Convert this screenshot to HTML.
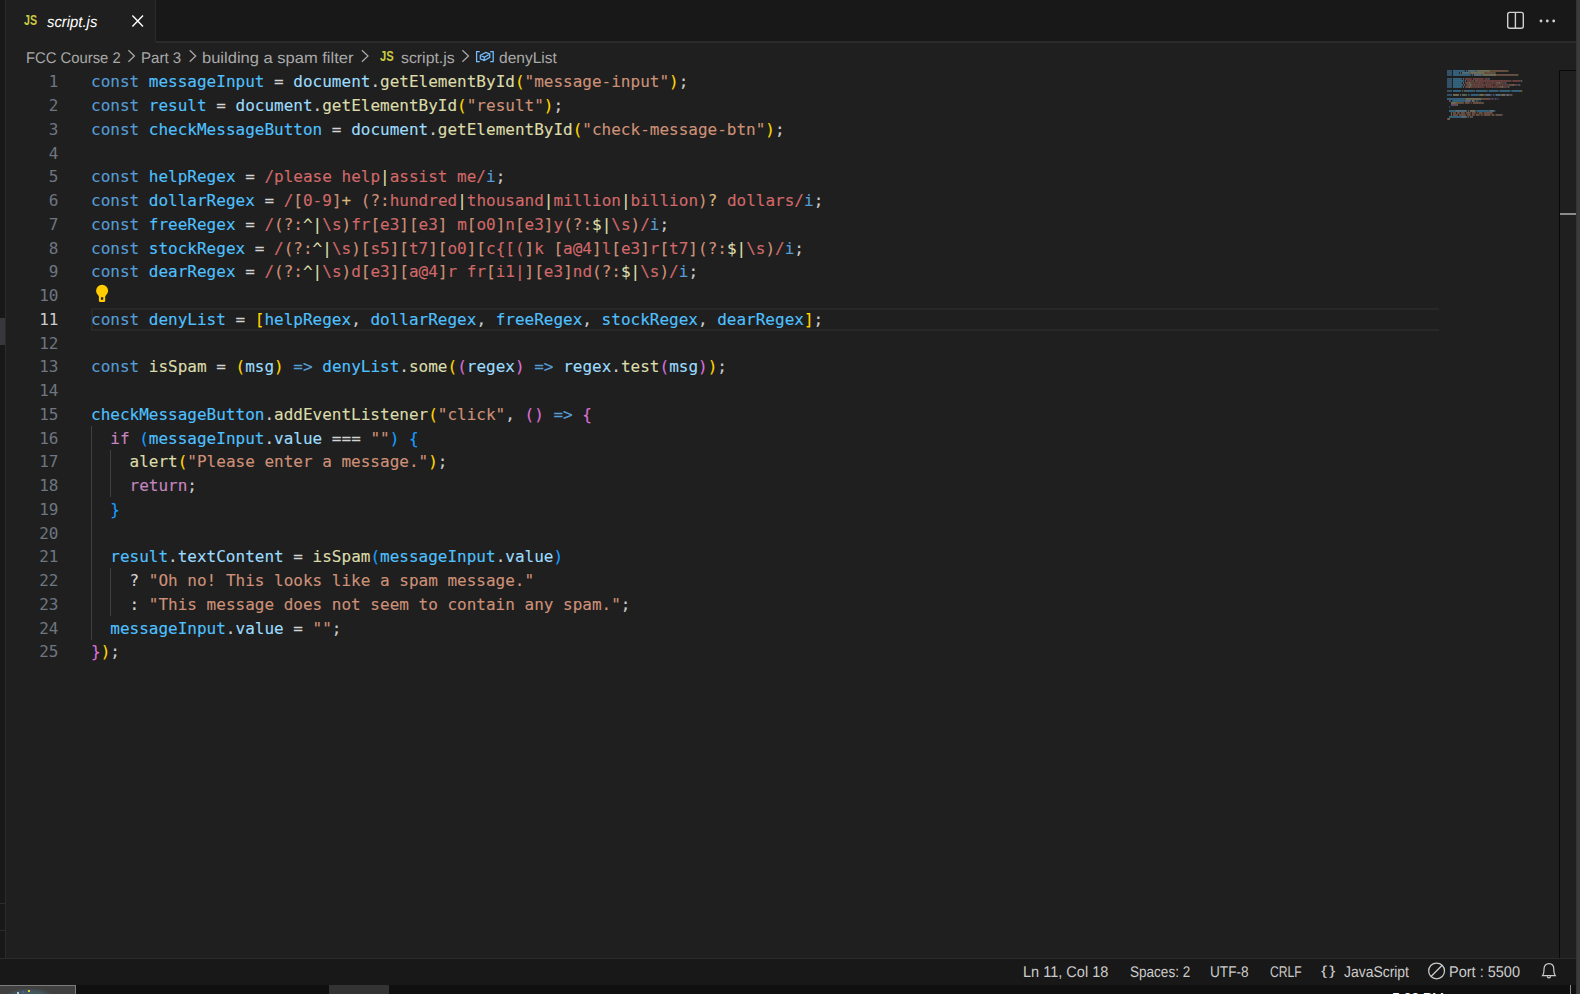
<!DOCTYPE html>
<html><head><meta charset="utf-8"><title>script.js</title>
<style>
*{box-sizing:border-box;margin:0;padding:0}
html,body{width:1580px;height:994px;overflow:hidden;background:#1f1f1f}
body{position:relative;font-family:"Liberation Sans","DejaVu Sans",sans-serif;color:#cccccc}
.abs{position:absolute}
#leftstrip{left:0;top:0;width:5px;height:985px;background:#181818}
#leftborder{left:5px;top:0;width:1px;height:958px;background:#2b2b2b}
#tabbar{left:6px;top:0;width:1570px;height:41px;background:#181818}
#tabbarborder{left:155px;top:41px;width:1421px;height:1.5px;background:#2b2b2b}
#tab{left:6px;top:0;width:150px;height:43px;background:#1f1f1f}
#tabright{left:155px;top:0;width:1px;height:42px;background:#2b2b2b}
.t{position:absolute;white-space:pre;line-height:20px;font-size:15.5px;text-rendering:geometricPrecision;transform-origin:0 0;color:#cccccc}
.bc{color:#a9a9a9}
#code{left:91px;top:70.3px;font-family:"DejaVu Sans Mono","Liberation Mono",monospace;font-size:16px;color:#cccccc;-webkit-text-stroke:0.12px}
#code .ln{height:23.75px;line-height:23.75px;white-space:pre}
#nums{left:0;top:70.3px;width:58.5px;font-family:"DejaVu Sans Mono","Liberation Mono",monospace;font-size:16px;text-align:right;color:#6e7681}
#nums .n{height:23.75px;line-height:23.75px}
#nums .act{color:#cccccc}
.c0{color:#569cd6}.c1{color:#4fc1ff}.c2{color:#d4d4d4}.c3{color:#9cdcfe}.c4{color:#dcdcaa}.c5{color:#ffd700}.c6{color:#ce9178}.c7{color:#d16969}.c8{color:#d7ba7d}.c9{color:#da70d6}.c10{color:#c586c0}.c11{color:#179fff}
.guide{width:1px;background:#404040}
#status{left:0;top:958px;width:1576px;height:27px;background:#181818;border-top:1px solid #2b2b2b}
#taskbar{left:0;top:985px;width:1580px;height:9px;background:#101010}
</style></head><body>
<div id="leftstrip" class="abs"></div>
<div class="abs" style="left:0;top:318px;width:5px;height:27px;background:#37373d"></div>
<div class="abs" style="left:0;top:903px;width:5px;height:1px;background:#2b2b2b"></div>
<div class="abs" style="left:0;top:930px;width:5px;height:1px;background:#2b2b2b"></div>
<div id="leftborder" class="abs"></div>
<div id="tabbar" class="abs"></div>
<div id="tabbarborder" class="abs"></div>
<div id="tab" class="abs"></div>
<div id="tabright" class="abs"></div>
<!-- tab content -->
<svg class="abs" style="left:130px;top:13px" width="16" height="16" viewBox="0 0 16 16"><path d="M2.4 2.6 L13 13.4 M13 2.6 L2.4 13.4" stroke="#ffffff" stroke-width="1.4" fill="none"/></svg>
<!-- top right icons -->
<svg class="abs" style="left:1505px;top:10px" width="22" height="22" viewBox="0 0 22 22"><rect x="2.7" y="2.4" width="15.6" height="15.8" rx="2" fill="none" stroke="#d0d0d0" stroke-width="1.4"/><path d="M10.4 2.4V18.2" stroke="#d0d0d0" stroke-width="1.4"/></svg>
<svg class="abs" style="left:1536px;top:16px" width="24" height="10" viewBox="0 0 24 10"><circle cx="5" cy="5" r="1.4" fill="#d0d0d0"/><circle cx="11.3" cy="5" r="1.4" fill="#d0d0d0"/><circle cx="17.7" cy="5" r="1.4" fill="#d0d0d0"/></svg>
<!-- breadcrumbs -->

<svg class="abs" style="left:0;top:44px" width="600" height="24" viewBox="0 0 600 24" fill="none" stroke="#a9a9a9" stroke-width="1.25">
<path d="M128.4 6.3 L134.4 12 L128.4 17.700"/><path d="M189.7 6.3 L195.7 12 L189.7 17.700"/><path d="M361.9 6.3 L368.0 12 L361.9 17.700"/><path d="M462.4 6.3 L468.5 12 L462.4 17.700"/>
<g stroke="#75beff" stroke-width="1.250"><path d="M479.800 7.700 H476.600 V17.700 H479.800"/><path d="M490.200 7.700 H493.200 V17.700 H490.200"/><path d="M480.300 11.300 L485.800 8.500 L489.800 10 L489.800 13.300 L484.200 16.500 L480.300 14.800 Z M480.300 11.300 L484.300 13.200 L489.800 10 M484.300 13.200 L484.200 16.500"/></g>
</svg>
<!-- current line -->
<div class="abs" style="left:91px;top:308px;width:1348px;height:23px;border:2px solid #282828;border-right:none"></div>
<!-- indent guides -->
<div class="abs guide" style="left:91px;top:425.8px;height:213.8px"></div>
<div class="abs guide" style="left:110.3px;top:449.6px;height:47.5px"></div>
<div class="abs guide" style="left:110.3px;top:568.4px;height:47.5px"></div>
<!-- lightbulb -->
<svg class="abs" style="left:90px;top:280px" width="24" height="26" viewBox="0 0 24 26"><path fill-rule="evenodd" d="M12.1 4.8A6 6 0 0 0 6.100 10.800C6.100 13 7.400 14.500 8.300 15.500C8.800 16 8.900 16.400 8.900 17V20.800A1.300 1.300 0 0 0 10.200 22.100H13.900A1.300 1.300 0 0 0 15.200 20.800V17C15.200 16.400 15.300 16 15.800 15.500C16.700 14.500 18.100 13 18.100 10.800A6 6 0 0 0 12.100 4.800ZM10.900 17.300H13.200V19.700H10.900Z" fill="#ffcc00"/></svg>
<div id="nums" class="abs">
<div class="n">1</div>
<div class="n">2</div>
<div class="n">3</div>
<div class="n">4</div>
<div class="n">5</div>
<div class="n">6</div>
<div class="n">7</div>
<div class="n">8</div>
<div class="n">9</div>
<div class="n">10</div>
<div class="n act">11</div>
<div class="n">12</div>
<div class="n">13</div>
<div class="n">14</div>
<div class="n">15</div>
<div class="n">16</div>
<div class="n">17</div>
<div class="n">18</div>
<div class="n">19</div>
<div class="n">20</div>
<div class="n">21</div>
<div class="n">22</div>
<div class="n">23</div>
<div class="n">24</div>
<div class="n">25</div>

</div>
<div id="code" class="abs">
<div class="ln"><span class="c0">const</span> <span class="c1">messageInput</span> <span class="c2">=</span> <span class="c3">document</span>.<span class="c4">getElementById</span><span class="c5">(</span><span class="c6">"message-input"</span><span class="c5">)</span>;</div>
<div class="ln"><span class="c0">const</span> <span class="c1">result</span> <span class="c2">=</span> <span class="c3">document</span>.<span class="c4">getElementById</span><span class="c5">(</span><span class="c6">"result"</span><span class="c5">)</span>;</div>
<div class="ln"><span class="c0">const</span> <span class="c1">checkMessageButton</span> <span class="c2">=</span> <span class="c3">document</span>.<span class="c4">getElementById</span><span class="c5">(</span><span class="c6">"check-message-btn"</span><span class="c5">)</span>;</div>
<div class="ln"></div>
<div class="ln"><span class="c0">const</span> <span class="c1">helpRegex</span> <span class="c2">=</span> <span class="c7">/please help</span><span class="c4">|</span><span class="c7">assist me/</span><span class="c0">i</span>;</div>
<div class="ln"><span class="c0">const</span> <span class="c1">dollarRegex</span> <span class="c2">=</span> <span class="c7">/</span><span class="c6">[</span><span class="c7">0-9</span><span class="c6">]</span><span class="c8">+</span><span class="c7"> </span><span class="c6">(?:</span><span class="c7">hundred</span><span class="c4">|</span><span class="c7">thousand</span><span class="c4">|</span><span class="c7">million</span><span class="c4">|</span><span class="c7">billion</span><span class="c6">)</span><span class="c8">?</span><span class="c7"> dollars/</span><span class="c0">i</span>;</div>
<div class="ln"><span class="c0">const</span> <span class="c1">freeRegex</span> <span class="c2">=</span> <span class="c7">/</span><span class="c6">(?:</span><span class="c4">^|</span><span class="c7">\s</span><span class="c6">)</span><span class="c7">fr</span><span class="c6">[</span><span class="c7">e3</span><span class="c6">][</span><span class="c7">e3</span><span class="c6">]</span><span class="c7"> m</span><span class="c6">[</span><span class="c7">o0</span><span class="c6">]</span><span class="c7">n</span><span class="c6">[</span><span class="c7">e3</span><span class="c6">]</span><span class="c7">y</span><span class="c6">(?:</span><span class="c4">$|</span><span class="c7">\s</span><span class="c6">)</span><span class="c7">/</span><span class="c0">i</span>;</div>
<div class="ln"><span class="c0">const</span> <span class="c1">stockRegex</span> <span class="c2">=</span> <span class="c7">/</span><span class="c6">(?:</span><span class="c4">^|</span><span class="c7">\s</span><span class="c6">)[</span><span class="c7">s5</span><span class="c6">][</span><span class="c7">t7</span><span class="c6">][</span><span class="c7">o0</span><span class="c6">][</span><span class="c7">c{[(</span><span class="c6">]</span><span class="c7">k </span><span class="c6">[</span><span class="c7">a@4</span><span class="c6">]</span><span class="c7">l</span><span class="c6">[</span><span class="c7">e3</span><span class="c6">]</span><span class="c7">r</span><span class="c6">[</span><span class="c7">t7</span><span class="c6">](?:</span><span class="c4">$|</span><span class="c7">\s</span><span class="c6">)</span><span class="c7">/</span><span class="c0">i</span>;</div>
<div class="ln"><span class="c0">const</span> <span class="c1">dearRegex</span> <span class="c2">=</span> <span class="c7">/</span><span class="c6">(?:</span><span class="c4">^|</span><span class="c7">\s</span><span class="c6">)</span><span class="c7">d</span><span class="c6">[</span><span class="c7">e3</span><span class="c6">][</span><span class="c7">a@4</span><span class="c6">]</span><span class="c7">r fr</span><span class="c6">[</span><span class="c7">i1|</span><span class="c6">][</span><span class="c7">e3</span><span class="c6">]</span><span class="c7">nd</span><span class="c6">(?:</span><span class="c4">$|</span><span class="c7">\s</span><span class="c6">)</span><span class="c7">/</span><span class="c0">i</span>;</div>
<div class="ln"></div>
<div class="ln"><span class="c0">const</span> <span class="c1">denyList</span> <span class="c2">=</span> <span class="c5">[</span><span class="c1">helpRegex</span>, <span class="c1">dollarRegex</span>, <span class="c1">freeRegex</span>, <span class="c1">stockRegex</span>, <span class="c1">dearRegex</span><span class="c5">]</span>;</div>
<div class="ln"></div>
<div class="ln"><span class="c0">const</span> <span class="c4">isSpam</span> <span class="c2">=</span> <span class="c5">(</span><span class="c3">msg</span><span class="c5">)</span> <span class="c0">=&gt;</span> <span class="c1">denyList</span>.<span class="c4">some</span><span class="c5">(</span><span class="c9">(</span><span class="c3">regex</span><span class="c9">)</span> <span class="c0">=&gt;</span> <span class="c3">regex</span>.<span class="c4">test</span><span class="c9">(</span><span class="c3">msg</span><span class="c9">)</span><span class="c5">)</span>;</div>
<div class="ln"></div>
<div class="ln"><span class="c1">checkMessageButton</span>.<span class="c4">addEventListener</span><span class="c5">(</span><span class="c6">"click"</span>, <span class="c9">()</span> <span class="c0">=&gt;</span> <span class="c9">{</span></div>
<div class="ln">  <span class="c10">if</span> <span class="c11">(</span><span class="c1">messageInput</span>.<span class="c3">value</span> <span class="c2">===</span> <span class="c6">""</span><span class="c11">)</span> <span class="c11">{</span></div>
<div class="ln">    <span class="c4">alert</span><span class="c5">(</span><span class="c6">"Please enter a message."</span><span class="c5">)</span>;</div>
<div class="ln">    <span class="c10">return</span>;</div>
<div class="ln">  <span class="c11">}</span></div>
<div class="ln"></div>
<div class="ln">  <span class="c1">result</span>.<span class="c3">textContent</span> <span class="c2">=</span> <span class="c4">isSpam</span><span class="c11">(</span><span class="c1">messageInput</span>.<span class="c3">value</span><span class="c11">)</span></div>
<div class="ln">    <span class="c2">?</span> <span class="c6">"Oh no! This looks like a spam message."</span></div>
<div class="ln">    <span class="c2">:</span> <span class="c6">"This message does not seem to contain any spam."</span>;</div>
<div class="ln">  <span class="c1">messageInput</span>.<span class="c3">value</span> <span class="c2">=</span> <span class="c6">""</span>;</div>
<div class="ln"><span class="c9">}</span><span class="c5">)</span>;</div>

</div>
<!-- minimap + scrollbar -->
<svg class="abs" style="left:0;top:0" width="1580" height="994" viewBox="0 0 1580 994" opacity="0.42"><rect x="1447.00" y="70.00" width="4.95" height="1.9" fill="#569cd6"/><rect x="1452.94" y="70.00" width="11.88" height="1.9" fill="#4fc1ff"/><rect x="1465.81" y="70.00" width="0.99" height="1.9" fill="#d4d4d4"/><rect x="1467.79" y="70.00" width="7.92" height="1.9" fill="#9cdcfe"/><rect x="1475.71" y="70.00" width="0.99" height="1.9" fill="#cccccc"/><rect x="1476.70" y="70.00" width="13.86" height="1.9" fill="#dcdcaa"/><rect x="1490.56" y="70.00" width="0.99" height="1.9" fill="#ffd700"/><rect x="1491.55" y="70.00" width="14.85" height="1.9" fill="#ce9178"/><rect x="1506.40" y="70.00" width="0.99" height="1.9" fill="#ffd700"/><rect x="1507.39" y="70.00" width="0.99" height="1.9" fill="#cccccc"/><rect x="1447.00" y="72.00" width="4.95" height="1.9" fill="#569cd6"/><rect x="1452.94" y="72.00" width="5.94" height="1.9" fill="#4fc1ff"/><rect x="1459.87" y="72.00" width="0.99" height="1.9" fill="#d4d4d4"/><rect x="1461.85" y="72.00" width="7.92" height="1.9" fill="#9cdcfe"/><rect x="1469.77" y="72.00" width="0.99" height="1.9" fill="#cccccc"/><rect x="1470.76" y="72.00" width="13.86" height="1.9" fill="#dcdcaa"/><rect x="1484.62" y="72.00" width="0.99" height="1.9" fill="#ffd700"/><rect x="1485.61" y="72.00" width="7.92" height="1.9" fill="#ce9178"/><rect x="1493.53" y="72.00" width="0.99" height="1.9" fill="#ffd700"/><rect x="1494.52" y="72.00" width="0.99" height="1.9" fill="#cccccc"/><rect x="1447.00" y="74.00" width="4.95" height="1.9" fill="#569cd6"/><rect x="1452.94" y="74.00" width="17.82" height="1.9" fill="#4fc1ff"/><rect x="1471.75" y="74.00" width="0.99" height="1.9" fill="#d4d4d4"/><rect x="1473.73" y="74.00" width="7.92" height="1.9" fill="#9cdcfe"/><rect x="1481.65" y="74.00" width="0.99" height="1.9" fill="#cccccc"/><rect x="1482.64" y="74.00" width="13.86" height="1.9" fill="#dcdcaa"/><rect x="1496.50" y="74.00" width="0.99" height="1.9" fill="#ffd700"/><rect x="1497.49" y="74.00" width="18.81" height="1.9" fill="#ce9178"/><rect x="1516.30" y="74.00" width="0.99" height="1.9" fill="#ffd700"/><rect x="1517.29" y="74.00" width="0.99" height="1.9" fill="#cccccc"/><rect x="1447.00" y="78.00" width="4.95" height="1.9" fill="#569cd6"/><rect x="1452.94" y="78.00" width="8.91" height="1.9" fill="#4fc1ff"/><rect x="1462.84" y="78.00" width="0.99" height="1.9" fill="#d4d4d4"/><rect x="1464.82" y="78.00" width="6.93" height="1.9" fill="#d16969"/><rect x="1472.74" y="78.00" width="3.96" height="1.9" fill="#d16969"/><rect x="1476.70" y="78.00" width="0.99" height="1.9" fill="#dcdcaa"/><rect x="1477.69" y="78.00" width="5.94" height="1.9" fill="#d16969"/><rect x="1484.62" y="78.00" width="2.97" height="1.9" fill="#d16969"/><rect x="1487.59" y="78.00" width="0.99" height="1.9" fill="#569cd6"/><rect x="1488.58" y="78.00" width="0.99" height="1.9" fill="#cccccc"/><rect x="1447.00" y="80.00" width="4.95" height="1.9" fill="#569cd6"/><rect x="1452.94" y="80.00" width="10.89" height="1.9" fill="#4fc1ff"/><rect x="1464.82" y="80.00" width="0.99" height="1.9" fill="#d4d4d4"/><rect x="1466.80" y="80.00" width="0.99" height="1.9" fill="#d16969"/><rect x="1467.79" y="80.00" width="0.99" height="1.9" fill="#ce9178"/><rect x="1468.78" y="80.00" width="2.97" height="1.9" fill="#d16969"/><rect x="1471.75" y="80.00" width="0.99" height="1.9" fill="#ce9178"/><rect x="1472.74" y="80.00" width="0.99" height="1.9" fill="#d7ba7d"/><rect x="1474.72" y="80.00" width="2.97" height="1.9" fill="#ce9178"/><rect x="1477.69" y="80.00" width="6.93" height="1.9" fill="#d16969"/><rect x="1484.62" y="80.00" width="0.99" height="1.9" fill="#dcdcaa"/><rect x="1485.61" y="80.00" width="7.92" height="1.9" fill="#d16969"/><rect x="1493.53" y="80.00" width="0.99" height="1.9" fill="#dcdcaa"/><rect x="1494.52" y="80.00" width="6.93" height="1.9" fill="#d16969"/><rect x="1501.45" y="80.00" width="0.99" height="1.9" fill="#dcdcaa"/><rect x="1502.44" y="80.00" width="6.93" height="1.9" fill="#d16969"/><rect x="1509.37" y="80.00" width="0.99" height="1.9" fill="#ce9178"/><rect x="1510.36" y="80.00" width="0.99" height="1.9" fill="#d7ba7d"/><rect x="1512.34" y="80.00" width="7.92" height="1.9" fill="#d16969"/><rect x="1520.26" y="80.00" width="0.99" height="1.9" fill="#569cd6"/><rect x="1521.25" y="80.00" width="0.99" height="1.9" fill="#cccccc"/><rect x="1447.00" y="82.00" width="4.95" height="1.9" fill="#569cd6"/><rect x="1452.94" y="82.00" width="8.91" height="1.9" fill="#4fc1ff"/><rect x="1462.84" y="82.00" width="0.99" height="1.9" fill="#d4d4d4"/><rect x="1464.82" y="82.00" width="0.99" height="1.9" fill="#d16969"/><rect x="1465.81" y="82.00" width="2.97" height="1.9" fill="#ce9178"/><rect x="1468.78" y="82.00" width="1.98" height="1.9" fill="#dcdcaa"/><rect x="1470.76" y="82.00" width="1.98" height="1.9" fill="#d16969"/><rect x="1472.74" y="82.00" width="0.99" height="1.9" fill="#ce9178"/><rect x="1473.73" y="82.00" width="1.98" height="1.9" fill="#d16969"/><rect x="1475.71" y="82.00" width="0.99" height="1.9" fill="#ce9178"/><rect x="1476.70" y="82.00" width="1.98" height="1.9" fill="#d16969"/><rect x="1478.68" y="82.00" width="1.98" height="1.9" fill="#ce9178"/><rect x="1480.66" y="82.00" width="1.98" height="1.9" fill="#d16969"/><rect x="1482.64" y="82.00" width="0.99" height="1.9" fill="#ce9178"/><rect x="1484.62" y="82.00" width="0.99" height="1.9" fill="#d16969"/><rect x="1485.61" y="82.00" width="0.99" height="1.9" fill="#ce9178"/><rect x="1486.60" y="82.00" width="1.98" height="1.9" fill="#d16969"/><rect x="1488.58" y="82.00" width="0.99" height="1.9" fill="#ce9178"/><rect x="1489.57" y="82.00" width="0.99" height="1.9" fill="#d16969"/><rect x="1490.56" y="82.00" width="0.99" height="1.9" fill="#ce9178"/><rect x="1491.55" y="82.00" width="1.98" height="1.9" fill="#d16969"/><rect x="1493.53" y="82.00" width="0.99" height="1.9" fill="#ce9178"/><rect x="1494.52" y="82.00" width="0.99" height="1.9" fill="#d16969"/><rect x="1495.51" y="82.00" width="2.97" height="1.9" fill="#ce9178"/><rect x="1498.48" y="82.00" width="1.98" height="1.9" fill="#dcdcaa"/><rect x="1500.46" y="82.00" width="1.98" height="1.9" fill="#d16969"/><rect x="1502.44" y="82.00" width="0.99" height="1.9" fill="#ce9178"/><rect x="1503.43" y="82.00" width="0.99" height="1.9" fill="#d16969"/><rect x="1504.42" y="82.00" width="0.99" height="1.9" fill="#569cd6"/><rect x="1505.41" y="82.00" width="0.99" height="1.9" fill="#cccccc"/><rect x="1447.00" y="84.00" width="4.95" height="1.9" fill="#569cd6"/><rect x="1452.94" y="84.00" width="9.90" height="1.9" fill="#4fc1ff"/><rect x="1463.83" y="84.00" width="0.99" height="1.9" fill="#d4d4d4"/><rect x="1465.81" y="84.00" width="0.99" height="1.9" fill="#d16969"/><rect x="1466.80" y="84.00" width="2.97" height="1.9" fill="#ce9178"/><rect x="1469.77" y="84.00" width="1.98" height="1.9" fill="#dcdcaa"/><rect x="1471.75" y="84.00" width="1.98" height="1.9" fill="#d16969"/><rect x="1473.73" y="84.00" width="1.98" height="1.9" fill="#ce9178"/><rect x="1475.71" y="84.00" width="1.98" height="1.9" fill="#d16969"/><rect x="1477.69" y="84.00" width="1.98" height="1.9" fill="#ce9178"/><rect x="1479.67" y="84.00" width="1.98" height="1.9" fill="#d16969"/><rect x="1481.65" y="84.00" width="1.98" height="1.9" fill="#ce9178"/><rect x="1483.63" y="84.00" width="1.98" height="1.9" fill="#d16969"/><rect x="1485.61" y="84.00" width="1.98" height="1.9" fill="#ce9178"/><rect x="1487.59" y="84.00" width="3.96" height="1.9" fill="#d16969"/><rect x="1491.55" y="84.00" width="0.99" height="1.9" fill="#ce9178"/><rect x="1492.54" y="84.00" width="0.99" height="1.9" fill="#d16969"/><rect x="1494.52" y="84.00" width="0.99" height="1.9" fill="#ce9178"/><rect x="1495.51" y="84.00" width="2.97" height="1.9" fill="#d16969"/><rect x="1498.48" y="84.00" width="0.99" height="1.9" fill="#ce9178"/><rect x="1499.47" y="84.00" width="0.99" height="1.9" fill="#d16969"/><rect x="1500.46" y="84.00" width="0.99" height="1.9" fill="#ce9178"/><rect x="1501.45" y="84.00" width="1.98" height="1.9" fill="#d16969"/><rect x="1503.43" y="84.00" width="0.99" height="1.9" fill="#ce9178"/><rect x="1504.42" y="84.00" width="0.99" height="1.9" fill="#d16969"/><rect x="1505.41" y="84.00" width="0.99" height="1.9" fill="#ce9178"/><rect x="1506.40" y="84.00" width="1.98" height="1.9" fill="#d16969"/><rect x="1508.38" y="84.00" width="3.96" height="1.9" fill="#ce9178"/><rect x="1512.34" y="84.00" width="1.98" height="1.9" fill="#dcdcaa"/><rect x="1514.32" y="84.00" width="1.98" height="1.9" fill="#d16969"/><rect x="1516.30" y="84.00" width="0.99" height="1.9" fill="#ce9178"/><rect x="1517.29" y="84.00" width="0.99" height="1.9" fill="#d16969"/><rect x="1518.28" y="84.00" width="0.99" height="1.9" fill="#569cd6"/><rect x="1519.27" y="84.00" width="0.99" height="1.9" fill="#cccccc"/><rect x="1447.00" y="86.00" width="4.95" height="1.9" fill="#569cd6"/><rect x="1452.94" y="86.00" width="8.91" height="1.9" fill="#4fc1ff"/><rect x="1462.84" y="86.00" width="0.99" height="1.9" fill="#d4d4d4"/><rect x="1464.82" y="86.00" width="0.99" height="1.9" fill="#d16969"/><rect x="1465.81" y="86.00" width="2.97" height="1.9" fill="#ce9178"/><rect x="1468.78" y="86.00" width="1.98" height="1.9" fill="#dcdcaa"/><rect x="1470.76" y="86.00" width="1.98" height="1.9" fill="#d16969"/><rect x="1472.74" y="86.00" width="0.99" height="1.9" fill="#ce9178"/><rect x="1473.73" y="86.00" width="0.99" height="1.9" fill="#d16969"/><rect x="1474.72" y="86.00" width="0.99" height="1.9" fill="#ce9178"/><rect x="1475.71" y="86.00" width="1.98" height="1.9" fill="#d16969"/><rect x="1477.69" y="86.00" width="1.98" height="1.9" fill="#ce9178"/><rect x="1479.67" y="86.00" width="2.97" height="1.9" fill="#d16969"/><rect x="1482.64" y="86.00" width="0.99" height="1.9" fill="#ce9178"/><rect x="1483.63" y="86.00" width="0.99" height="1.9" fill="#d16969"/><rect x="1485.61" y="86.00" width="1.98" height="1.9" fill="#d16969"/><rect x="1487.59" y="86.00" width="0.99" height="1.9" fill="#ce9178"/><rect x="1488.58" y="86.00" width="2.97" height="1.9" fill="#d16969"/><rect x="1491.55" y="86.00" width="1.98" height="1.9" fill="#ce9178"/><rect x="1493.53" y="86.00" width="1.98" height="1.9" fill="#d16969"/><rect x="1495.51" y="86.00" width="0.99" height="1.9" fill="#ce9178"/><rect x="1496.50" y="86.00" width="1.98" height="1.9" fill="#d16969"/><rect x="1498.48" y="86.00" width="2.97" height="1.9" fill="#ce9178"/><rect x="1501.45" y="86.00" width="1.98" height="1.9" fill="#dcdcaa"/><rect x="1503.43" y="86.00" width="1.98" height="1.9" fill="#d16969"/><rect x="1505.41" y="86.00" width="0.99" height="1.9" fill="#ce9178"/><rect x="1506.40" y="86.00" width="0.99" height="1.9" fill="#d16969"/><rect x="1507.39" y="86.00" width="0.99" height="1.9" fill="#569cd6"/><rect x="1508.38" y="86.00" width="0.99" height="1.9" fill="#cccccc"/><rect x="1447.00" y="90.00" width="4.95" height="1.9" fill="#569cd6"/><rect x="1452.94" y="90.00" width="7.92" height="1.9" fill="#4fc1ff"/><rect x="1461.85" y="90.00" width="0.99" height="1.9" fill="#d4d4d4"/><rect x="1463.83" y="90.00" width="0.99" height="1.9" fill="#ffd700"/><rect x="1464.82" y="90.00" width="8.91" height="1.9" fill="#4fc1ff"/><rect x="1473.73" y="90.00" width="0.99" height="1.9" fill="#cccccc"/><rect x="1475.71" y="90.00" width="10.89" height="1.9" fill="#4fc1ff"/><rect x="1486.60" y="90.00" width="0.99" height="1.9" fill="#cccccc"/><rect x="1488.58" y="90.00" width="8.91" height="1.9" fill="#4fc1ff"/><rect x="1497.49" y="90.00" width="0.99" height="1.9" fill="#cccccc"/><rect x="1499.47" y="90.00" width="9.90" height="1.9" fill="#4fc1ff"/><rect x="1509.37" y="90.00" width="0.99" height="1.9" fill="#cccccc"/><rect x="1511.35" y="90.00" width="8.91" height="1.9" fill="#4fc1ff"/><rect x="1520.26" y="90.00" width="0.99" height="1.9" fill="#ffd700"/><rect x="1521.25" y="90.00" width="0.99" height="1.9" fill="#cccccc"/><rect x="1447.00" y="94.00" width="4.95" height="1.9" fill="#569cd6"/><rect x="1452.94" y="94.00" width="5.94" height="1.9" fill="#dcdcaa"/><rect x="1459.87" y="94.00" width="0.99" height="1.9" fill="#d4d4d4"/><rect x="1461.85" y="94.00" width="0.99" height="1.9" fill="#ffd700"/><rect x="1462.84" y="94.00" width="2.97" height="1.9" fill="#9cdcfe"/><rect x="1465.81" y="94.00" width="0.99" height="1.9" fill="#ffd700"/><rect x="1467.79" y="94.00" width="1.98" height="1.9" fill="#569cd6"/><rect x="1470.76" y="94.00" width="7.92" height="1.9" fill="#4fc1ff"/><rect x="1478.68" y="94.00" width="0.99" height="1.9" fill="#cccccc"/><rect x="1479.67" y="94.00" width="3.96" height="1.9" fill="#dcdcaa"/><rect x="1483.63" y="94.00" width="0.99" height="1.9" fill="#ffd700"/><rect x="1484.62" y="94.00" width="0.99" height="1.9" fill="#da70d6"/><rect x="1485.61" y="94.00" width="4.95" height="1.9" fill="#9cdcfe"/><rect x="1490.56" y="94.00" width="0.99" height="1.9" fill="#da70d6"/><rect x="1492.54" y="94.00" width="1.98" height="1.9" fill="#569cd6"/><rect x="1495.51" y="94.00" width="4.95" height="1.9" fill="#9cdcfe"/><rect x="1500.46" y="94.00" width="0.99" height="1.9" fill="#cccccc"/><rect x="1501.45" y="94.00" width="3.96" height="1.9" fill="#dcdcaa"/><rect x="1505.41" y="94.00" width="0.99" height="1.9" fill="#da70d6"/><rect x="1506.40" y="94.00" width="2.97" height="1.9" fill="#9cdcfe"/><rect x="1509.37" y="94.00" width="0.99" height="1.9" fill="#da70d6"/><rect x="1510.36" y="94.00" width="0.99" height="1.9" fill="#ffd700"/><rect x="1511.35" y="94.00" width="0.99" height="1.9" fill="#cccccc"/><rect x="1447.00" y="98.00" width="17.82" height="1.9" fill="#4fc1ff"/><rect x="1464.82" y="98.00" width="0.99" height="1.9" fill="#cccccc"/><rect x="1465.81" y="98.00" width="15.84" height="1.9" fill="#dcdcaa"/><rect x="1481.65" y="98.00" width="0.99" height="1.9" fill="#ffd700"/><rect x="1482.64" y="98.00" width="6.93" height="1.9" fill="#ce9178"/><rect x="1489.57" y="98.00" width="0.99" height="1.9" fill="#cccccc"/><rect x="1491.55" y="98.00" width="1.98" height="1.9" fill="#da70d6"/><rect x="1494.52" y="98.00" width="1.98" height="1.9" fill="#569cd6"/><rect x="1497.49" y="98.00" width="0.99" height="1.9" fill="#da70d6"/><rect x="1448.98" y="100.00" width="1.98" height="1.9" fill="#c586c0"/><rect x="1451.95" y="100.00" width="0.99" height="1.9" fill="#179fff"/><rect x="1452.94" y="100.00" width="11.88" height="1.9" fill="#4fc1ff"/><rect x="1464.82" y="100.00" width="0.99" height="1.9" fill="#cccccc"/><rect x="1465.81" y="100.00" width="4.95" height="1.9" fill="#9cdcfe"/><rect x="1471.75" y="100.00" width="2.97" height="1.9" fill="#d4d4d4"/><rect x="1475.71" y="100.00" width="1.98" height="1.9" fill="#ce9178"/><rect x="1477.69" y="100.00" width="0.99" height="1.9" fill="#179fff"/><rect x="1479.67" y="100.00" width="0.99" height="1.9" fill="#179fff"/><rect x="1450.96" y="102.00" width="4.95" height="1.9" fill="#dcdcaa"/><rect x="1455.91" y="102.00" width="0.99" height="1.9" fill="#ffd700"/><rect x="1456.90" y="102.00" width="6.93" height="1.9" fill="#ce9178"/><rect x="1464.82" y="102.00" width="4.95" height="1.9" fill="#ce9178"/><rect x="1470.76" y="102.00" width="0.99" height="1.9" fill="#ce9178"/><rect x="1472.74" y="102.00" width="8.91" height="1.9" fill="#ce9178"/><rect x="1481.65" y="102.00" width="0.99" height="1.9" fill="#ffd700"/><rect x="1482.64" y="102.00" width="0.99" height="1.9" fill="#cccccc"/><rect x="1450.96" y="104.00" width="5.94" height="1.9" fill="#c586c0"/><rect x="1456.90" y="104.00" width="0.99" height="1.9" fill="#cccccc"/><rect x="1448.98" y="106.00" width="0.99" height="1.9" fill="#179fff"/><rect x="1448.98" y="110.00" width="5.94" height="1.9" fill="#4fc1ff"/><rect x="1454.92" y="110.00" width="0.99" height="1.9" fill="#cccccc"/><rect x="1455.91" y="110.00" width="10.89" height="1.9" fill="#9cdcfe"/><rect x="1467.79" y="110.00" width="0.99" height="1.9" fill="#d4d4d4"/><rect x="1469.77" y="110.00" width="5.94" height="1.9" fill="#dcdcaa"/><rect x="1475.71" y="110.00" width="0.99" height="1.9" fill="#179fff"/><rect x="1476.70" y="110.00" width="11.88" height="1.9" fill="#4fc1ff"/><rect x="1488.58" y="110.00" width="0.99" height="1.9" fill="#cccccc"/><rect x="1489.57" y="110.00" width="4.95" height="1.9" fill="#9cdcfe"/><rect x="1494.52" y="110.00" width="0.99" height="1.9" fill="#179fff"/><rect x="1450.96" y="112.00" width="0.99" height="1.9" fill="#d4d4d4"/><rect x="1452.94" y="112.00" width="2.97" height="1.9" fill="#ce9178"/><rect x="1456.90" y="112.00" width="2.97" height="1.9" fill="#ce9178"/><rect x="1460.86" y="112.00" width="3.96" height="1.9" fill="#ce9178"/><rect x="1465.81" y="112.00" width="4.95" height="1.9" fill="#ce9178"/><rect x="1471.75" y="112.00" width="3.96" height="1.9" fill="#ce9178"/><rect x="1476.70" y="112.00" width="0.99" height="1.9" fill="#ce9178"/><rect x="1478.68" y="112.00" width="3.96" height="1.9" fill="#ce9178"/><rect x="1483.63" y="112.00" width="8.91" height="1.9" fill="#ce9178"/><rect x="1450.96" y="114.00" width="0.99" height="1.9" fill="#d4d4d4"/><rect x="1452.94" y="114.00" width="4.95" height="1.9" fill="#ce9178"/><rect x="1458.88" y="114.00" width="6.93" height="1.9" fill="#ce9178"/><rect x="1466.80" y="114.00" width="3.96" height="1.9" fill="#ce9178"/><rect x="1471.75" y="114.00" width="2.97" height="1.9" fill="#ce9178"/><rect x="1475.71" y="114.00" width="3.96" height="1.9" fill="#ce9178"/><rect x="1480.66" y="114.00" width="1.98" height="1.9" fill="#ce9178"/><rect x="1483.63" y="114.00" width="6.93" height="1.9" fill="#ce9178"/><rect x="1491.55" y="114.00" width="2.97" height="1.9" fill="#ce9178"/><rect x="1495.51" y="114.00" width="5.94" height="1.9" fill="#ce9178"/><rect x="1501.45" y="114.00" width="0.99" height="1.9" fill="#cccccc"/><rect x="1448.98" y="116.00" width="11.88" height="1.9" fill="#4fc1ff"/><rect x="1460.86" y="116.00" width="0.99" height="1.9" fill="#cccccc"/><rect x="1461.85" y="116.00" width="4.95" height="1.9" fill="#9cdcfe"/><rect x="1467.79" y="116.00" width="0.99" height="1.9" fill="#d4d4d4"/><rect x="1469.77" y="116.00" width="1.98" height="1.9" fill="#ce9178"/><rect x="1471.75" y="116.00" width="0.99" height="1.9" fill="#cccccc"/><rect x="1447.00" y="118.00" width="0.99" height="1.9" fill="#da70d6"/><rect x="1447.99" y="118.00" width="0.99" height="1.9" fill="#ffd700"/><rect x="1448.98" y="118.00" width="0.99" height="1.9" fill="#cccccc"/></svg>
<div class="abs" style="left:1559px;top:69.5px;width:17px;height:888.5px;border-left:1px solid #06090d;border-top:1px solid #06090d"></div>
<div class="abs" style="left:1560px;top:213px;width:16px;height:2px;background:#8c8c8a"></div>
<!-- status bar -->
<div id="status" class="abs"></div>
<svg class="abs" style="left:1426px;top:961px" width="22" height="22" viewBox="0 0 22 22" fill="none" stroke="#cccccc" stroke-width="1.25"><circle cx="10.6" cy="9.9" r="7.9"/><path d="M5 15.500 L16.200 4.300"/></svg>
<svg class="abs" style="left:1540px;top:960.6px" width="18" height="20" viewBox="0 0 18 20" fill="none" stroke="#cccccc" stroke-width="1.2"><path d="M2.6 14.6 C4.2 12.5 4 10.5 4 8 C4 4.6 6.200 2.6 8.9 2.6 C11.6 2.6 13.800 4.6 13.800 8 C13.800 10.500 13.600 12.500 15.200 14.600 Z"/><path d="M7.300 15.200 C7.300 17.300 10.500 17.300 10.500 15.200"/></svg>
<div id="tabname" class="t" style="left:46.50px;top:12.70px;transform:scaleX(0.9585);font-style:italic;color:#ffffff">script.js</div>
<div id="bc1" class="t bc" style="left:25.50px;top:48.70px;transform:scaleX(0.9557);">FCC Course 2</div>
<div id="bc2" class="t bc" style="left:141.00px;top:48.70px;transform:scaleX(0.9730);">Part 3</div>
<div id="bc3" class="t bc" style="left:202.20px;top:48.70px;transform:scaleX(1.0651);">building a spam filter</div>
<div id="bc4" class="t bc" style="left:401.40px;top:48.70px;transform:scaleX(1.0223);">script.js</div>
<div id="bc5" class="t bc" style="left:499.30px;top:48.70px;transform:scaleX(1.0033);">denyList</div>
<div id="sb1" class="t" style="left:1022.70px;top:962.70px;transform:scaleX(0.9376);">Ln 11, Col 18</div>
<div id="sb2" class="t" style="left:1129.60px;top:962.70px;transform:scaleX(0.8732);">Spaces: 2</div>
<div id="sb3" class="t" style="left:1210.14px;top:962.70px;transform:scaleX(0.8800);">UTF-8</div>
<div id="sb4" class="t" style="left:1269.56px;top:962.70px;transform:scaleX(0.7826);">CRLF</div>
<div id="sb5" class="t" style="left:1321.28px;top:961.00px;transform:scaleX(1.4117);font-size:13px;letter-spacing:1.5px">{}</div>
<div id="sb6" class="t" style="left:1344.14px;top:962.70px;transform:scaleX(0.8978);">JavaScript</div>
<div id="sb7" class="t" style="left:1448.70px;top:962.70px;transform:scaleX(0.9363);">Port : 5500</div>
<div id="tabjs" class="t" style="left:24.00px;top:10.20px;transform:scaleX(0.7593);font-weight:bold;font-size:14px;color:#cbcb41;text-rendering:auto">JS</div>
<div id="bcjs" class="t" style="left:380.00px;top:46.20px;transform:scaleX(0.8009);font-weight:bold;font-size:14px;color:#cbcb41;text-rendering:auto">JS</div>

<!-- right strip -->
<div class="abs" style="left:1576px;top:0;width:1px;height:994px;background:#333333"></div>
<div class="abs" style="left:1577px;top:0;width:3px;height:994px;background:#3c3c3c"></div>
<!-- taskbar -->
<div id="taskbar" class="abs" style="width:1576px"></div>
<div class="abs" style="left:0;top:984.6px;width:76px;height:10px;background:#404040;border-top:1.3px solid #7c7c7c;border-right:1px solid #7c7c7c;overflow:hidden"><div class="abs" style="left:4px;top:2.2px;width:50px;height:20px;border-radius:50%;background:radial-gradient(ellipse at center,#466068 0%,#43555a 50%,#404040 72%)"></div><div class="abs" style="left:28px;top:4px;width:1.6px;height:2px;background:#e8c83a"></div><div class="abs" style="left:23px;top:5.6px;width:1.4px;height:1.4px;background:#3a6fd0"></div><div class="abs" style="left:16.500px;top:6.800px;width:2px;height:1.5px;background:#b9c4d6"></div></div>
<div class="abs" style="left:328.5px;top:985px;width:60.5px;height:9px;background:#333333"></div>
<div class="abs" style="left:1570px;top:985px;width:1px;height:9px;background:#8a8a8a"></div>
<div class="abs" style="left:1392px;top:991.5px;width:60px;height:2.5px;overflow:hidden"><div style="font-size:14.5px;line-height:16px;color:#ffffff;white-space:pre;margin-top:-2px;letter-spacing:-0.3px">5:02 PM</div></div>
</body></html>
